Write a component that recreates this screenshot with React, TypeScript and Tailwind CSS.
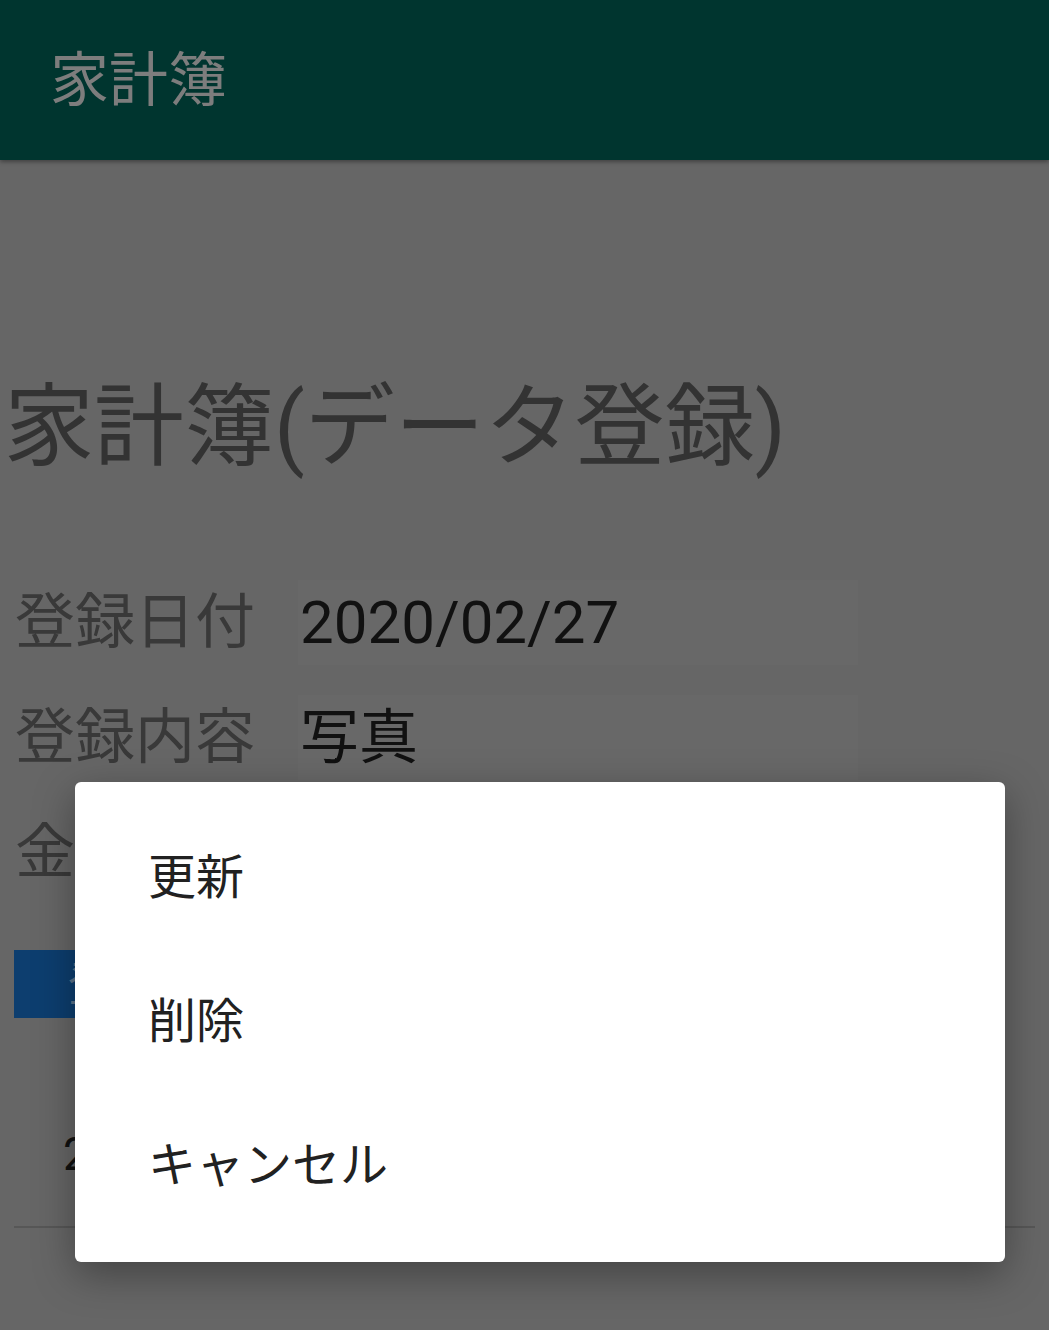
import React from "react";

const font = { fontFamily: 'Roboto, "Noto Sans CJK JP", sans-serif' };

function Row({ label, value, digits }: { label: string; value: string; digits?: boolean }) {
  return (
    <div className="flex h-[85px] items-center">
      <div className="w-[298px] pl-[15px] text-[60px] leading-none text-[#393939]">{label}</div>
      <div className="flex h-[85px] w-[560px] items-center bg-[#686868] pl-[2px]">
        <span className={digits ? "text-[60px] leading-none text-[#111111]" : "text-[59px] leading-none text-[#111111]"}>
          {value}
        </span>
      </div>
    </div>
  );
}

export default function App() {
  return (
    <div className="relative h-[1330px] w-[1049px] overflow-hidden bg-[#666666]" style={font}>
      <header className="flex h-[160px] items-center bg-[#00352f] pl-[50px] shadow-[0_2px_4px_rgba(0,0,0,0.35)]">
        <span className="text-[59px] leading-none text-[#7d7d7d]">家計簿</span>
      </header>

      <main className="flex flex-col">
        <h1 className="mt-[215px] pl-[4px] text-[90px] font-normal leading-[106px] text-[#333333]">
          家計簿(データ登録)
        </h1>

        <div className="mt-[99px] flex flex-col gap-[30px]">
          <Row label="登録日付" value="2020/02/27" digits />
          <Row label="登録内容" value="写真" />
          <Row label="金額" value="" />
        </div>

        <div className="mt-[55px] pl-[14px]">
          <button className="flex h-[68px] w-[200px] items-center justify-center bg-[#0d3e6f] text-[46px] leading-none text-[#5c738b]">
            登録
          </button>
        </div>

        <div className="mt-[113px] pl-[63px] text-[46px] leading-none text-[#111111]">2020/02/27</div>

        <div className="ml-[14px] mr-[14px] mt-[49px] h-[2px] bg-[#575757]" />
      </main>

      <div className="absolute left-[75px] top-[782px] flex h-[480px] w-[930px] flex-col rounded-[6px] bg-white pt-[24px] shadow-[0_12px_40px_rgba(0,0,0,0.35)]">
        {["更新", "削除", "キャンセル"].map((t) => (
          <div key={t} className="flex h-[144px] items-center pl-[73px] text-[48px] leading-none text-[#212121]">
            {t}
          </div>
        ))}
      </div>
    </div>
  );
}
